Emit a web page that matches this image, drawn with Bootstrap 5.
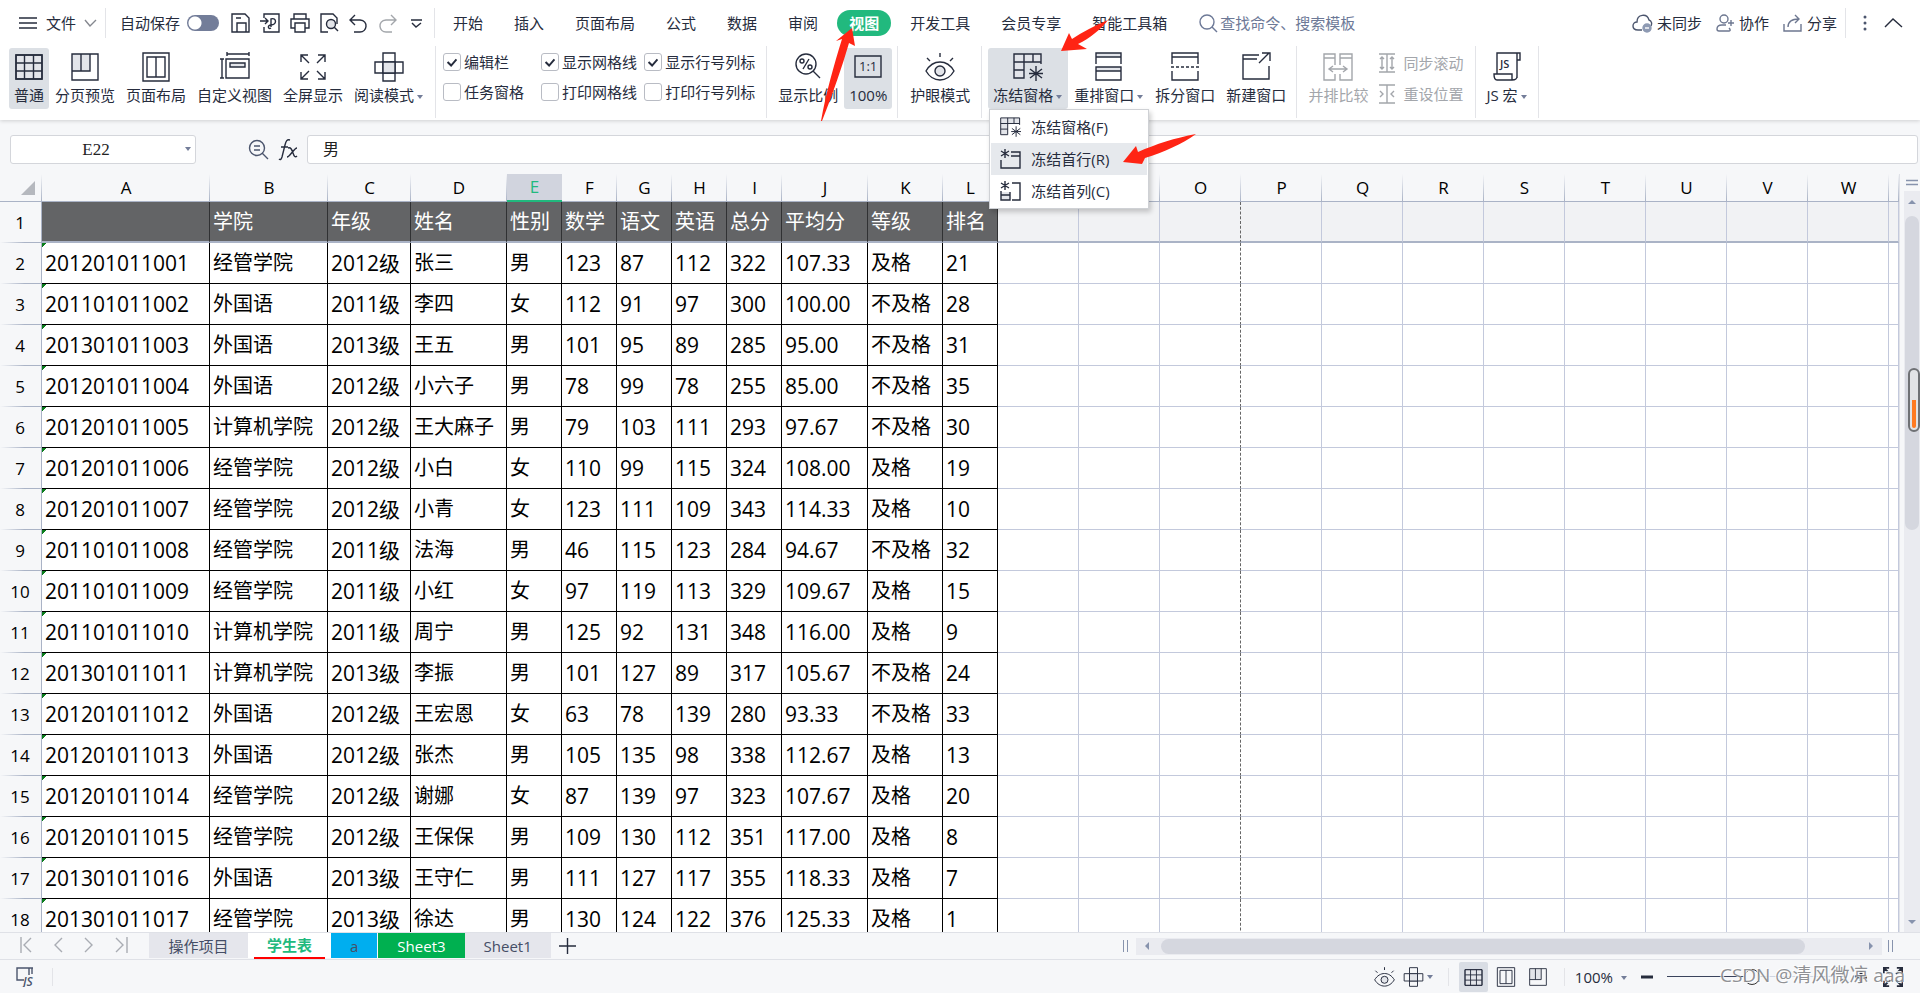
<!DOCTYPE html>
<html lang="zh-CN">
<head>
<meta charset="utf-8">
<meta name="viewport" content="width=device-width, initial-scale=1">
<title>学生表</title>
<link href="https://cdn.jsdelivr.net/npm/bootstrap@5.3.0/dist/css/bootstrap.min.css" rel="stylesheet">
<style>
  :root { --ink:#262c3d; --muted:#a3a6ab; --line:#c3c9dc; --head:#aab3c6; --pane:#f6f7f9; --green:#21b97e; }
  body { font-family:"Open Sans","Noto Sans CJK SC",sans-serif; font-size:15px; line-height:20px; color:var(--ink); height:100vh; background:var(--pane); }
  button { color:inherit; background:none; border:0; padding:0; white-space:nowrap; }
  svg { display:block; flex:none; fill:none; stroke:currentColor; stroke-width:1.4; }
  svg text { font-family:"Open Sans",sans-serif; fill:currentColor; stroke:none; }
  .vline { width:1px; background:#e3e4e8; flex:none; }
  .app-header { background:#fff; box-shadow:0 1px 4px rgba(0,0,0,.16); z-index:5; }
  .titlebar { height:46px; padding:0 17px 0 18px; }
  .titlebar .vline { height:30px; }
  .tab-btn { height:26px; padding:0 12px; border-radius:13px; }
  .tab-btn.on { background:var(--green); color:#fff; font-weight:700; }
  .autosave.form-check-input { width:32px; height:16px; margin:0 0 0 7px; border:0; background-color:#737d99; box-shadow:none;
    background-image:radial-gradient(circle at 8px 8px,#fff 6px,transparent 7px); background-position:left; background-size:32px 16px; border-radius:8px; }
  .find { color:#6d7997; }
  .find input { border:0; outline:0; padding:0; width:150px; color:inherit; }
  .find input::placeholder { color:inherit; opacity:1; }
  .ribbon { height:74px; padding-left:9px; }
  .ribbon .vline { height:72px; }
  .tool { height:61px; padding:4px 5px; border-radius:3px; margin-top:2px; }
  .tool.on { background:#dce0e5; }
  .tool svg { margin:0 auto 3px; }
  .caret { display:inline-block; border:3px solid transparent; border-top:4px solid #737d99; border-bottom:0; vertical-align:middle; margin-left:3px; }
  .tool .caret { margin-right:1px; }
  .off { color:var(--muted); }
  .opt { height:30px; gap:3px; display:flex; align-items:center; white-space:nowrap; }
  .opt .form-check-input { width:18px; height:18px; margin:0; border:1px solid #b9bcc4; border-radius:3px; background-color:#fff; box-shadow:none; }
  .opt .form-check-input:checked { background-image:url("data:image/svg+xml,%3csvg xmlns='http://www.w3.org/2000/svg' viewBox='0 0 18 18'%3e%3cpath fill='none' stroke='%23262c3d' stroke-width='2.2' d='M4 9l4 4 6-7'/%3e%3c/svg%3e"); }
  .freeze-menu { left:1px; top:63px; width:160px; background:#fff; border:1px solid #cfd1d5; box-shadow:2px 3px 5px rgba(0,0,0,.2); padding:1px; z-index:10; }
  .freeze-menu button { display:flex; align-items:center; height:32px; width:100%; padding-left:9px; gap:10px; }
  .freeze-menu button.on { background:#e6e9ed; }
  .pointers { left:0; top:0; z-index:20; pointer-events:none; fill:#ff2414; stroke:none; overflow:visible; }
  .formula { padding:15px 2px 10px 10px; }
  .formula input { height:29px; border:1px solid #d4d6db; border-radius:3px; background:#fff; outline:0; color:#222; }
  .name-box { width:186px; text-align:center; font:17px "Liberation Serif",serif; padding:0 30px 0 16px; }
  .value-box { font:16px "Liberation Serif","Noto Sans CJK SC",serif; padding:0 15px 4px; }
  .formula .pick { right:5px; top:12px; }
  .sheet { min-height:0; overflow:hidden; }
  .pane { min-width:0; overflow:hidden; border-right:1px solid #dfe1e7; }
  .cells { table-layout:fixed; border-collapse:separate; border-spacing:0; width:100%; font-size:20px; line-height:30px; color:#000; background:#fff; }
  .cells th, .cells td { padding:0; border:0 solid var(--line); border-right-width:1px; border-bottom-width:1px; height:41px; white-space:nowrap; overflow:hidden; font-weight:400; }
  .cells td { padding-left:3px; }
  .cells thead th { height:28px; font-size:17px; line-height:24px; text-align:center; border-right:0; border-bottom-color:var(--head);
    background:linear-gradient(transparent,var(--head)) right/1px 100% no-repeat var(--pane); }
  .cells thead th.on { background:#d1d4de; color:var(--green); border-bottom:2px solid var(--green); }
  .cells tbody th { font-size:17px; text-align:center; border-right-color:var(--head); border-bottom:0; padding-right:1px;
    background:linear-gradient(90deg,transparent,var(--head) 60%) bottom/100% 1px no-repeat var(--pane); }
  .cells .num { font-size:21px; }
  .cells .data { border-color:#000; }
  .cells .id { background:linear-gradient(135deg,#0a7d1c 3px,transparent 3px) 0 0/6px 6px no-repeat; }
  .cells .frozen td { background-color:#f1f2f4; border-bottom:2px solid var(--head); }
  .cells .frozen td.data { background:#636466; color:#fff; border-right-color:#303133; }
  .cells .pagebreak { border-right:1px dashed #666; }
  .vbar { width:20px; padding-left:4px; }
  .vtrack { background:#eaebf0; }
  .vthumb { background:#d5d7df; border-radius:8px; height:314px; margin:0 1px; }
  .gauge { right:0; top:194px; width:12px; height:64px; border:2px solid #6f7175; border-radius:6px; background:linear-gradient(#e2e3e6 28px,#ff7a22 28px) content-box,#e2e3e6; padding:2px; }
  .up, .down, .lft, .rgt { width:0; height:0; border:4px solid transparent; }
  .up { border-bottom-color:#8793ad; border-top:0; } .down { border-top-color:#8793ad; border-bottom:0; }
  .lft { border-right-color:#8793ad; border-left:0; } .rgt { border-left-color:#8793ad; border-right:0; }
  .tabs-row { height:28px; border-top:1px solid #dfe1e7; border-bottom:1px solid #dfe1e7; }
  .sheet-tab { height:25px; background:#e5e6ec; color:#454e66; padding:0 19px; }
  .sheet-tab.on { background:#fff; color:var(--green); font-weight:700; padding:0; }
  .sheet-tab.on span { display:block; height:26px; line-height:25px; margin:0 6px; padding:0 13px; border-bottom:2px solid #f00; }
  .grip { width:5px; height:12px; border:solid #8793ad; border-width:0 1px; }
  .hbar { background:#eaebf0; height:17px; width:746px; padding:0 9px; }
  .hthumb { background:#d5d7df; border-radius:8px; height:15px; width:644px; margin-left:12px; }
  .status { height:33px; padding-right:17px; }
  .status .vline { height:18px; }
  .status .view-on { background:#d9dde4; border-radius:2px; padding:7px 4px; height:30px; }
  .zoom-range { appearance:none; width:180px; height:18px; margin:0 8px 0 14px; background:linear-gradient(90deg,#3a435c 86px,#cfd6e2 86px) center/100% 1px no-repeat; }
  .zoom-range::-webkit-slider-thumb { appearance:none; width:16px; height:16px; border:1px solid #333; border-radius:50%; background:#f6f7f9; }
  .stamp { right:15px; bottom:5px; font-size:19px; line-height:26px; color:#85878b; text-shadow:1px 1px 0 #fff,-1px -1px 0 #fff; opacity:.9; pointer-events:none; white-space:nowrap; }
</style>
<script src="https://cdn.jsdelivr.net/npm/bootstrap@5.3.0/dist/js/bootstrap.bundle.min.js"></script>
</head>
<body class="d-flex flex-column overflow-hidden position-relative">

<svg class="d-none">
  <symbol id="i-grid" viewBox="0 0 28 26"><path fill="#e3e5ea" d="M1 1h26v24H1z"/><path d="M1 1h26v24H1zM1 9h26M1 17h26M9.500 1v24M18.500 1v24"/></symbol>
  <symbol id="i-pages" viewBox="0 0 28 28"><path fill="#e3e5ea" d="M1 1h18v17H1z" stroke="none"/><path d="M1 1h26v26H1zM1 18h18V1M10 1v17"/></symbol>
  <symbol id="i-layout" viewBox="0 0 28 30"><path d="M1 1h26v28H1zM5 5h18v20H5zM14 5v20"/></symbol>
  <symbol id="i-cross" viewBox="0 0 30 30"><path d="M9 1h12v28H9zM1 10h28v11H1z"/><path fill="#e3e5ea" d="M9 10h12v11H9z"/></symbol>
  <symbol id="i-eye" viewBox="0 0 30 28"><path d="M1 18c7-12 21-12 28 0-7 12-21 12-28 0zM15 0v4M2 5l3 3M28 5l-3 3"/><circle cx="15" cy="18" r="5" fill="#e3e5ea"/></symbol>
  <symbol id="i-freeze" viewBox="0 0 30 28"><path fill="#e3e5ea" stroke="none" d="M1 1h27v8H11v16H1z"/><path d="M28 11V1H1v24h10V1M1 9h27M1 17h10M20 1v8M23 13v15M17 16l12 9M29 16l-12 9M16 20.500h14"/></symbol>
  <symbol id="i-row" viewBox="0 0 21 20"><path fill="#e3e5ea" stroke="none" d="M11 3h9v4h-9z"/><path d="M11 3h9v16H1v-8M11 7h9M5 0v9M1 2l8 5M9 2L1 7"/></symbol>
  <symbol id="i-col" viewBox="0 0 21 20"><path fill="#e3e5ea" stroke="none" d="M1 11h9v8H1z"/><path d="M1 10v9h9v-8M1 14h9M12 2h8v17h-8M5 0v9M1 2l8 5M9 2L1 7"/></symbol>
  <symbol id="i-full" viewBox="0 0 26 26"><path d="M9 9L1 1M1 8V1h7M17 9l8-8M18 1h7v7M9 17l-8 8M1 18v7h7M17 17l8 8M25 18v7h-7"/></symbol>
</svg>

<header class="app-header position-relative">
  <div class="titlebar d-flex align-items-center">
    <button class="d-flex align-items-center"><svg width="20" height="14" class="me-2"><path d="M1 2h18M1 7h18M1 12h18"/></svg>文件<svg width="13" height="8" class="ms-2" style="color:#85888f"><path d="M1 1l5 6 6-6"/></svg></button>
    <span class="vline mx-2"></span>
    <div class="d-flex align-items-center" style="margin-left:6px"><label for="auto">自动保存</label><input id="auto" type="checkbox" class="form-check-input autosave"></div>
    <div class="d-flex align-items-center" style="margin-left:12px;gap:10px">
      <button aria-label="保存"><svg width="19" height="20"><path d="M1 1h13l4 4v14H1zM6 19v-9h9v9M5 5h5"/></svg></button>
      <button aria-label="输出为PDF"><svg width="20" height="20"><path d="M4 5V1h15v18H4v-5M0 8h8M5 5l3 3-3 3M11 14V6c6-2 6 6 0 6-4 0-3 5 0 3"/></svg></button>
      <button aria-label="打印"><svg width="20" height="20"><path d="M4 6V1h12v5M5 15H1V6h18v9h-4M5 10h10v9H5z"/></svg></button>
      <button aria-label="打印预览"><svg width="19" height="20"><path d="M8 19H1V1h12l4 4v6"/><circle cx="11" cy="11" r="4.500" fill="#e3e5ea"/><path d="M14 14l4 4"/></svg></button>
      <button aria-label="撤销"><svg width="19" height="20"><path d="M6 2L1 7l5 5M1 7h10c9 1 7 12 0 12H5"/></svg></button>
      <button aria-label="恢复" class="off"><svg width="19" height="20"><path d="M13 2l5 5-5 5M18 7H8c-9 1-7 12 0 12h6"/></svg></button>
      <button aria-label="更多" class="ms-1"><svg width="11" height="9"><path d="M0 1h11M1 4l4 4 5-4"/></svg></button>
    </div>
    <span class="vline" style="margin-left:12px"></span>
    <nav class="d-flex" style="margin-left:6px;gap:7px">
      <button class="tab-btn">开始</button><button class="tab-btn">插入</button><button class="tab-btn">页面布局</button><button class="tab-btn">公式</button><button class="tab-btn">数据</button><button class="tab-btn">审阅</button><button class="tab-btn on">视图</button><button class="tab-btn">开发工具</button><button class="tab-btn">会员专享</button><button class="tab-btn">智能工具箱</button>
    </nav>
    <div class="find d-flex align-items-center ms-3"><svg width="21" height="20" class="ms-1"><circle cx="8" cy="9" r="7"/><path d="M13 14l5 5"/></svg><input aria-label="查找" placeholder="查找命令、搜索模板"></div>
    <div class="d-flex align-items-center ms-auto">
      <button class="d-flex align-items-center" style="margin-right:14px"><svg width="21" height="19" class="me-1" style="color:#4b556d"><path d="M10 16H6C-1 16 0 8 5 8 5 0 15-1 17 6c3 1 3 4 2 6"/><circle cx="15" cy="14" r="4" fill="#8e9ab3" stroke="#8e9ab3"/><path stroke="#fff" d="M13 14h4"/></svg>未同步</button>
      <button class="d-flex align-items-center" style="margin-right:14px"><svg width="19" height="19" class="me-1" style="color:#6d7790"><circle cx="8" cy="5" r="4"/><path d="M10 11H6c-4 0-5 2-5 4 0 2 1 2 2 2h10c2 0 1-2 0-3M15 6v6M12 9h6"/></svg>协作</button>
      <button class="d-flex align-items-center me-2"><svg width="20" height="19" class="me-1" style="color:#6d7790"><path d="M1 10v7h17v-7M5 13c0-6 4-8 11-8M12 1l4 4-4 4"/></svg>分享</button>
      <span class="vline"></span>
      <button aria-label="菜单" class="mx-3"><svg width="6" height="18"><g fill="#4b556d" stroke="none"><circle cx="3" cy="3" r="1.500"/><circle cx="3" cy="9" r="1.500"/><circle cx="3" cy="15" r="1.500"/></g></svg></button>
      <button aria-label="折叠"><svg width="19" height="12"><path d="M1 10l8-8 9 8"/></svg></button>
    </div>
  </div>

  <div class="ribbon d-flex">
    <div class="d-flex" style="gap:1px;padding-right:6px">
      <button class="tool on"><svg width="28" height="30"><use href="#i-grid"/></svg>普通</button>
      <button class="tool"><svg width="28" height="30"><use href="#i-pages"/></svg>分页预览</button>
      <button class="tool"><svg width="28" height="30"><use href="#i-layout"/></svg>页面布局</button>
      <button class="tool"><svg width="30" height="30"><path d="M7 0v4M29 0v4M7 2h22M0 7h4M0 26h4M2 7v19M6 7h23v19H6z"/><path fill="#e3e5ea" d="M10 11h15v4H10z"/></svg>自定义视图</button>
      <button class="tool"><svg width="26" height="30"><use href="#i-full"/></svg>全屏显示</button>
      <button class="tool"><svg width="30" height="30"><use href="#i-cross"/></svg>阅读模式<span class="caret"></span></button>
    </div>
    <span class="vline"></span>
    <div class="d-flex" style="padding:1px 11px 0 7px">
      <div style="margin-right:17px"><label class="opt"><input type="checkbox" class="form-check-input" checked>编辑栏</label><label class="opt"><input type="checkbox" class="form-check-input">任务窗格</label></div>
      <div style="margin-right:7px"><label class="opt"><input type="checkbox" class="form-check-input" checked>显示网格线</label><label class="opt"><input type="checkbox" class="form-check-input">打印网格线</label></div>
      <div><label class="opt"><input type="checkbox" class="form-check-input" checked>显示行号列标</label><label class="opt"><input type="checkbox" class="form-check-input">打印行号列标</label></div>
    </div>
    <span class="vline"></span>
    <div class="d-flex" style="padding:0 5px 0 6px;gap:1px">
      <button class="tool"><svg width="28" height="30"><circle cx="12" cy="12" r="10"/><path d="M19 19l7 7M15 7L9 17"/><circle cx="8" cy="9" r="2"/><circle cx="16" cy="15" r="2"/></svg>显示比例</button>
      <button class="tool on"><svg width="28" height="30"><path d="M1 4h26v21H1z"/><text x="5" y="19" font-size="13">1:1</text></svg>100%</button>
    </div>
    <span class="vline"></span>
    <div style="padding:0 6px 0 7px"><button class="tool"><svg width="30" height="30"><use href="#i-eye"/></svg>护眼模式</button></div>
    <span class="vline"></span>
    <div class="d-flex position-relative" style="padding:0 5px 0 6px;gap:1px">
      <div class="position-relative">
        <button class="tool on"><svg width="30" height="30"><use href="#i-freeze"/></svg>冻结窗格<span class="caret"></span></button>
        <div class="freeze-menu position-absolute">
          <button><svg width="21" height="20"><use href="#i-freeze"/></svg>冻结窗格(F)</button>
          <button class="on"><svg width="21" height="20"><use href="#i-row"/></svg>冻结首行(R)</button>
          <button><svg width="21" height="20"><use href="#i-col"/></svg>冻结首列(C)</button>
        </div>
      </div>
      <button class="tool"><svg width="28" height="30"><path fill="#e3e5ea" stroke="none" d="M1 1h25v4H1zM1 15h25v4H1z"/><path d="M1 12V1h25v11M1 5h25M1 15h25v13H1zM1 19h25"/></svg>重排窗口<span class="caret"></span></button>
      <button class="tool"><svg width="30" height="30"><path d="M2 12V1h26v11M2 5h26M2 19v9h26v-9"/><path stroke-dasharray="3 2" d="M1 15h28"/></svg>拆分窗口</button>
      <button class="tool"><svg width="30" height="30"><path d="M18 3H2v24h26V14M2 7h14M18 11L28 1M21 1h8v8"/></svg>新建窗口</button>
    </div>
    <span class="vline"></span>
    <div class="d-flex off" style="padding:0 12px 0 6px">
      <button class="tool"><svg width="30" height="30"><path d="M12 13V2H1v26h11v-6M1 6h11M17 13V2h12v26H17v-6M17 6h12M6 17h18M10 14l-4 3 4 3M20 14l4 3-4 3"/></svg>并排比较</button>
      <div class="d-flex flex-column" style="padding:7px 0 0 6px;gap:11px">
        <button class="d-flex align-items-center gap-2"><svg width="16" height="20"><path d="M0 1h16M0 19h16M8 1v18M3 4v12M13 4v12M1 6l2-2 2 2M11 6l2-2 2 2M1 14l2 2 2-2M11 14l2 2 2-2"/></svg>同步滚动</button>
        <button class="d-flex align-items-center gap-2"><svg width="16" height="20"><path d="M0 1h16M0 19h16M8 1v18M1 7l3 3-3 3M15 7l-3 3 3 3"/></svg>重设位置</button>
      </div>
    </div>
    <span class="vline"></span>
    <div style="padding:0 5px"><button class="tool"><svg width="28" height="30"><path d="M4 22V1h20v25M24 1h3v7h-3M1 22h18v6H4c-2 0-3-2-3-6zM19 28c4 0 5-1 5-4"/><text x="7" y="16" font-size="11" font-weight="600">JS</text></svg>JS 宏<span class="caret"></span></button></div>
    <span class="vline"></span>
  </div>

  <svg class="pointers position-absolute" width="1200" height="170">
    <path d="M852 28l3 18-6-3c-7 24-16 50-27 78h-1c5-28 13-56 21-82l-6 2z"/>
    <path d="M1061 51l8-18 3 6c10-7 22-13 36-19-8 10-18 18-30 24l9 5z"/>
    <path d="M1123 162l13-16 2 6c18-8 37-14 58-18-14 10-32 18-51 24l-3 6z"/>
  </svg>
</header>

<div class="formula d-flex align-items-center">
  <div class="position-relative"><input class="name-box" value="E22" aria-label="名称框"><span class="caret pick position-absolute"></span></div>
  <button aria-label="查找公式" style="margin-left:52px;color:#4b556d"><svg width="22" height="22"><circle cx="9" cy="9" r="7.500"/><path d="M14 14l6 6M6 7h6M6 11h6"/></svg></button>
  <button class="ms-2" aria-label="插入函数"><svg width="20" height="22"><path d="M12 1c-3-1-4 1-5 5L4 18c-1 3-2 3-3 2M3 8h7M10 9c3-1 4 2 5 5s2 5 4 3M19 9c-3 0-7 9-10 9"/></svg></button>
  <input class="value-box flex-grow-1" style="margin-left:9px" value="男" aria-label="编辑栏">
</div>

<main class="sheet d-flex flex-grow-1">
  <div class="pane flex-grow-1">
    <table class="cells">
      <colgroup id="cols"></colgroup>
      <thead><tr id="letters"></tr></thead>
      <tbody id="rows"></tbody>
    </table>
  </div>
  <div class="vbar d-flex flex-column position-relative">
    <svg width="16" height="17" style="color:#8793ad"><path d="M2 6.500h12M2 10.500h12"/></svg>
    <div class="vtrack flex-grow-1 d-flex flex-column">
      <span class="up align-self-center" style="margin:9px 0 12px"></span>
      <div class="vthumb"></div>
      <span class="down align-self-center mt-auto mb-2"></span>
    </div>
    <span class="gauge position-absolute"></span>
  </div>
</main>

<div class="tabs-row d-flex align-items-start flex-shrink-0">
  <div class="d-flex align-self-center" style="color:#a9acb3;padding:0 20px 2px 20px;gap:21px">
    <button aria-label="首个"><svg width="12" height="16"><path d="M1 0v16M11 1L4 8l7 7"/></svg></button>
    <button aria-label="上一个"><svg width="10" height="16"><path d="M9 1L2 8l7 7"/></svg></button>
    <button aria-label="下一个"><svg width="10" height="16"><path d="M1 1l7 7-7 7"/></svg></button>
    <button aria-label="末个"><svg width="14" height="16"><path d="M1 1l7 7-7 7M12 0v16"/></svg></button>
  </div>
  <button class="sheet-tab px-4 px-md-3 px-xl-3" style="min-width:99px">操作项目</button>
  <button class="sheet-tab on"><span>学生表</span></button>
  <button class="sheet-tab" style="background:#00aeef;margin:0 1px 0 0">a</button>
  <button class="sheet-tab" style="background:#00b050;color:#fff">Sheet3</button>
  <button class="sheet-tab">Sheet1</button>
  <button aria-label="新建工作表" class="ms-2 align-self-center"><svg width="17" height="18"><path d="M8.500 1v16M0 9h17"/></svg></button>
  <span class="grip ms-auto align-self-center"></span>
  <div class="hbar d-flex align-items-center align-self-center ms-2"><span class="lft"></span><div class="hthumb"></div><span class="rgt ms-auto"></span></div>
  <span class="grip align-self-center" style="margin:0 27px 0 6px"></span>
</div>

<footer class="status d-flex align-items-center flex-shrink-0">
  <svg width="20" height="20" style="margin-left:16px;color:#4b556d"><path d="M8 13H1V1h16M13 8V1h3v6"/><text x="7" y="19" font-size="12" font-style="italic" font-weight="600">JS</text></svg>
  <span class="vline ms-3"></span>
  <button aria-label="护眼" class="ms-auto"><svg width="21" height="20"><use href="#i-eye"/></svg></button>
  <button aria-label="阅读" class="d-flex align-items-center ms-2"><svg width="21" height="20"><use href="#i-cross"/></svg><span class="caret"></span></button>
  <span class="vline" style="margin:0 10px 0 15px"></span>
  <button aria-label="普通视图" class="view-on"><svg width="21" height="17"><use href="#i-grid"/></svg></button>
  <button aria-label="页面视图" class="ms-2"><svg width="20" height="20"><use href="#i-layout"/></svg></button>
  <button aria-label="分页视图" style="margin:0 16px 0 12px"><svg width="20" height="18"><use href="#i-pages"/></svg></button>
  <span class="vline"></span>
  <button style="margin:0 14px 0 10px">100%<span class="caret ms-2"></span></button>
  <button aria-label="缩小"><svg width="12" height="12"><path stroke-width="3" d="M0 6h12"/></svg></button>
  <input type="range" class="zoom-range" aria-label="缩放" min="0" max="100" value="47">
  <button aria-label="放大"><svg width="12" height="12"><path stroke-width="3" d="M0 6h12M6 0v12"/></svg></button>
  <button aria-label="全屏" class="ms-3"><svg width="20" height="20"><use href="#i-full" stroke-width="2.500"/></svg></button>
</footer>
<div class="stamp position-absolute">CSDN @清风微凉 aaa</div>

<script>
  const widths = [42,168,118,83,96,55,55,55,55,55,86,75,55].concat(Array(11).fill(81));
  const titles = ['','学院','年级','姓名','性别','数学','语文','英语','总分','平均分','等级','排名'];
  const records = `201201011001 经管学院 2012级 张三 男 123 87 112 322 107.33 及格 21
201101011002 外国语 2011级 李四 女 112 91 97 300 100.00 不及格 28
201301011003 外国语 2013级 王五 男 101 95 89 285 95.00 不及格 31
201201011004 外国语 2012级 小六子 男 78 99 78 255 85.00 不及格 35
201201011005 计算机学院 2012级 王大麻子 男 79 103 111 293 97.67 不及格 30
201201011006 经管学院 2012级 小白 女 110 99 115 324 108.00 及格 19
201201011007 经管学院 2012级 小青 女 123 111 109 343 114.33 及格 10
201101011008 经管学院 2011级 法海 男 46 115 123 284 94.67 不及格 32
201101011009 经管学院 2011级 小红 女 97 119 113 329 109.67 及格 15
201101011010 计算机学院 2011级 周宁 男 125 92 131 348 116.00 及格 9
201301011011 计算机学院 2013级 李振 男 101 127 89 317 105.67 不及格 24
201201011012 外国语 2012级 王宏恩 女 63 78 139 280 93.33 不及格 33
201201011013 外国语 2012级 张杰 男 105 135 98 338 112.67 及格 13
201201011014 经管学院 2012级 谢娜 女 87 139 97 323 107.67 及格 20
201201011015 经管学院 2012级 王保保 男 109 130 112 351 117.00 及格 8
201301011016 外国语 2013级 王守仁 男 111 127 117 355 118.33 及格 7
201301011017 经管学院 2013级 徐达 男 130 124 122 376 125.33 及格 1`.split('\n').map(r => r.split(' '));

  document.getElementById('cols').innerHTML = widths.map(w => `<col style="width:${w}px">`).join('') + '<col>';
  document.getElementById('letters').innerHTML =
    '<th><svg width="14" height="14" style="margin-left:21px"><path fill="#b5b8be" stroke="none" d="M14 0v14H0z"/></svg></th>' +
    [...'ABCDEFGHIJKLMNOPQRSTUVW'].map(c => `<th class="${c === 'E' ? 'on' : ''}">${c}</th>`).join('') + '<th></th>';
  const blanks = Array.from({length: 12}, (_, i) => `<td class="${i === 2 ? 'pagebreak' : ''}"></td>`).join('');
  document.getElementById('rows').innerHTML = [titles, ...records].map((r, n) =>
    `<tr class="${n ? '' : 'frozen'}"><th>${n + 1}</th>` +
    r.map((v, i) => `<td class="data${n && /^\d/.test(v) ? ' num' : ''}${n && !i ? ' id' : ''}">${v}</td>`).join('') +
    blanks + '</tr>').join('');
</script>
</body>
</html>
